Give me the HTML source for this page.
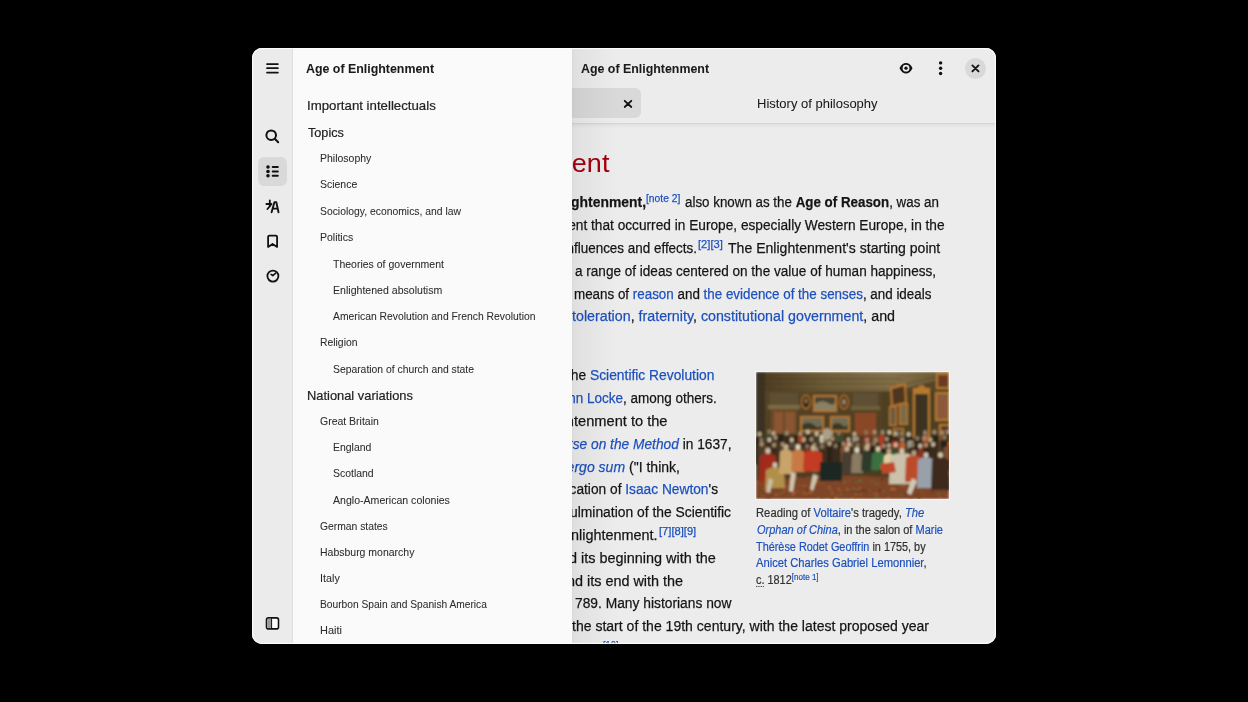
<!DOCTYPE html>
<html><head><meta charset="utf-8"><style>

*{margin:0;padding:0;box-sizing:border-box}
html,body{width:1248px;height:702px;overflow:hidden;background:#000;font-family:"Liberation Sans", sans-serif}
b{font-weight:700}
.a{color:#1d50bd}
.ii{font-style:italic}
sup{font-size:0.74em;vertical-align:0.42em;line-height:0}
.t{position:absolute;white-space:nowrap;transform-origin:0 0}
.pre{position:absolute;right:100%;top:0;white-space:pre}

.win{position:absolute;left:252px;top:48px;width:744px;height:596px;border-radius:10px;overflow:hidden;background:#ececec}
.body{font-size:15.5px;line-height:15.5px;color:#141414;-webkit-text-stroke:0.25px currentColor}
.cap{font-size:12.5px;line-height:12.5px;color:#303030;-webkit-text-stroke:0.2px currentColor}
.toc1{font-size:13.2px;line-height:13.2px;color:#222;-webkit-text-stroke:0.2px currentColor}
.toc2{font-size:11.2px;line-height:11.2px;color:#2a2a2a;-webkit-text-stroke:0.05px currentColor}
.ttl{position:absolute;white-space:nowrap;font-weight:700;font-size:13px;line-height:13px;color:#1a1a1a;transform-origin:0 0;-webkit-text-stroke:0.05px currentColor}
.hdr{position:absolute;left:40px;top:0;width:704px;height:40px;background:#ececec}
.tabs{position:absolute;left:40px;top:40px;width:704px;height:36px;background:#ececec;border-bottom:1px solid #d6d6d6}
.tsh{position:absolute;left:40px;top:76px;width:704px;height:4px;background:linear-gradient(rgba(0,0,0,0.05),rgba(0,0,0,0))}
.tab{position:absolute;left:0;top:40px;width:389px;height:30px;border-radius:6px;background:#d9d9d9}
.art{position:absolute;left:40px;top:77px;width:704px;height:520px;background:#ececec}
.shade{position:absolute;left:320px;top:0;width:50px;height:596px;background:linear-gradient(to right,rgba(0,0,0,0.08) 0,rgba(0,0,0,0.055) 2px,rgba(0,0,0,0.045) 8px,rgba(0,0,0,0.03) 18px,rgba(0,0,0,0.012) 34px,rgba(0,0,0,0) 48px)}
.strip{position:absolute;left:0;top:0;width:41px;height:596px;background:#ebebeb;border-right:1px solid #dedede}
.side{position:absolute;left:41px;top:0;width:279px;height:596px;background:#fafafa}
.selbtn{position:absolute;left:6px;top:109px;width:29px;height:29px;border-radius:6px;background:#d9d9d9}
.closebtn{position:absolute;left:713px;top:10px;width:21px;height:21px;border-radius:50%;background:#d9d9d9}
.border{position:absolute;left:252px;top:48px;width:744px;height:596px;border-radius:10px;box-shadow:inset 0 0 0 1px rgba(255,255,255,0.75),inset 0 0 2px 1px rgba(255,255,255,0.45);pointer-events:none}
svg{position:absolute;overflow:visible}
.head{position:absolute;white-space:nowrap;font-size:26.5px;line-height:26.5px;color:#a5000f;transform-origin:0 0}
.img{position:absolute;left:503px;top:323px;width:195px;height:129px;background:#f4f4f4}
</style></head><body>
<div class="win">
  <div class="hdr"></div>
  <div class="tabs"></div>
  <div class="tab"></div>
  <div class="art"></div>
  <div class="tsh"></div>
  <!-- content title -->
  <div class="ttl" style="left:328.5px;top:14px;transform:scaleX(0.953)">Age of Enlightenment</div>
  <div class="ttl" style="left:505px;top:48.9px;font-weight:400;transform:scaleX(0.999)">History of philosophy</div>
  <!-- tab close -->
  <svg style="left:369.5px;top:49.5px" width="12" height="12" viewBox="0 0 12 12"><path d="M2.7 2.8 L9.3 9.0 M9.3 2.8 L2.7 9.0" stroke="#111" stroke-width="1.8" stroke-linecap="round"/></svg>
  <!-- eye -->
  <svg style="left:644.6px;top:12px" width="18" height="18" viewBox="0 0 18 18"><path d="M2.5 8.2 C4.1 4.6 6.5 3 9 3 C11.5 3 13.9 4.6 15.5 8.2 C13.9 11.8 11.5 13.4 9 13.4 C6.5 13.4 4.1 11.8 2.5 8.2 Z" fill="#111"/><circle cx="9" cy="8.2" r="3.4" fill="#ececec"/><circle cx="9" cy="8.2" r="1.65" fill="#111"/></svg>
  <!-- dots -->
  <svg style="left:680px;top:12px" width="18" height="18" viewBox="0 0 18 18"><circle cx="8.6" cy="2.9" r="1.7" fill="#111"/><circle cx="8.6" cy="8.2" r="1.7" fill="#111"/><circle cx="8.6" cy="13.5" r="1.7" fill="#111"/></svg>
  <div class="closebtn"></div>
  <svg style="left:713px;top:10px" width="21" height="21" viewBox="0 0 21 21"><path d="M7.4 7.4 L13.5 13.4 M13.5 7.4 L7.4 13.4" stroke="#111" stroke-width="1.9" stroke-linecap="round"/></svg>

  <!-- article heading -->
  <div class="head" style="right:387px;top:101.6px;transform:scaleX(1.02);transform-origin:100% 0">Age of Enlightenment</div>

  <div class="t body" style="left:394.4px;top:146.4px;transform:scaleX(0.8964)"><span class="pre">The Age of Enlightenment or the <b>Enlightenment,</b></span><sup class="a">[note 2]</sup></div>
<div class="t body" style="left:433.3px;top:146.4px;transform:scaleX(0.8617)">also known as the <b>Age of Reason</b>, was an</div>
<div class="t body" style="left:339.0px;top:169.2px;transform:scaleX(0.8832)"><span class="pre">philosophical movement </span>that occurred in Europe, especially Western Europe, in the</div>
<div class="t body" style="left:321.6px;top:192.0px;transform:scaleX(0.8668)"><span class="pre">18th centuries, with global in</span>fluences and effects.</div>
<div class="t body" style="left:445.6px;top:192.0px;transform:scaleX(0.9759)"><sup class="a">[2][3]</sup></div>
<div class="t body" style="left:475.5px;top:192.0px;transform:scaleX(0.9077)">The Enlightenment&#x27;s starting point</div>
<div class="t body" style="left:323.0px;top:214.8px;transform:scaleX(0.8746)"><span class="pre">included </span>a range of ideas centered on the value of human happiness,</div>
<div class="t body" style="left:321.6px;top:237.6px;transform:scaleX(0.8640)"><span class="pre">pursuit of knowledge obtained by </span>means of <span class="a">reason</span> and <span class="a">the evidence of the senses</span>, and ideals</div>
<div class="t body" style="left:320.0px;top:260.4px;transform:scaleX(0.9195)"><span class="pre">such as <span class="a">liberty</span>, <span class="a">progress</span>, </span><span class="a">toleration</span>, <span class="a">fraternity</span>, <span class="a">constitutional government</span>, and</div>
<div class="t body" style="left:337.8px;top:319.3px;transform:scaleX(0.8913)"><span class="pre">following the </span><span class="a">Scientific Revolution</span></div>
<div class="t body" style="left:335.3px;top:342.1px;transform:scaleX(0.8700)"><span class="pre">Baruch Spinoza, <span class="a">John </span></span><span class="a">Locke</span>, among others.</div>
<div class="t body" style="left:321.5px;top:364.9px;transform:scaleX(0.9436)"><span class="pre">of the Enligh</span>tenment to the</div>
<div class="t body" style="left:339.0px;top:387.7px;transform:scaleX(0.8860)"><span class="pre"><span class="a ii">Discourse </span></span><span class="a ii">on the Method</span> in 1637,</div>
<div class="t body" style="left:376.6px;top:410.5px;transform:scaleX(0.9054)"><span class="pre"><span class="a ii">Cogito, </span><span class="a ii">ergo sum </span></span>(&quot;I think,</div>
<div class="t body" style="left:358.0px;top:433.3px;transform:scaleX(0.8862)"><span class="pre">publication </span>of <span class="a">Isaac Newton</span>&#x27;s</div>
<div class="t body" style="left:385.0px;top:456.1px;transform:scaleX(0.8943)"><span class="pre">the culmination </span>of the Scientific</div>
<div class="t body" style="left:319.3px;top:478.9px;transform:scaleX(0.9295)"><span class="pre">E</span>nlightenment.</div>
<div class="t body" style="left:406.8px;top:478.9px;transform:scaleX(0.9722)"><sup class="a">[7][8][9]</sup></div>
<div class="t body" style="left:329.4px;top:501.7px;transform:scaleX(0.9319)"><span class="pre">marked </span>its beginning with the</div>
<div class="t body" style="left:334.5px;top:524.5px;transform:scaleX(0.9293)"><span class="pre">and </span>its end with the</div>
<div class="t body" style="left:322.5px;top:547.3px;transform:scaleX(0.8904)"><span class="pre">in </span>789. Many historians now</div>
<div class="t body" style="left:320.0px;top:570.1px;transform:scaleX(0.9053)"><span class="pre">date </span>the start of the 19th century, with the latest proposed year</div>
<div class="t body" style="left:351.0px;top:592.9px;transform:scaleX(0.8098)"><span class="pre"></span><sup class="a">[10]</sup></div>

  <div class="img"></div>
  <svg style="left:504px;top:324px" width="193" height="127" viewBox="0 0 193 127">
<defs>
<linearGradient id="cl" x1="0" y1="0" x2="1" y2="0">
<stop offset="0" stop-color="#4a3a20"/><stop offset="0.35" stop-color="#6e5c36"/><stop offset="0.7" stop-color="#84704a"/><stop offset="1" stop-color="#6a5630"/>
</linearGradient>
<linearGradient id="wl" x1="0" y1="0" x2="0" y2="1">
<stop offset="0" stop-color="#574626"/><stop offset="1" stop-color="#4a3a22"/>
</linearGradient>
<filter id="bl" x="-5%" y="-5%" width="110%" height="110%"><feGaussianBlur stdDeviation="0.8"/></filter>
<clipPath id="cp"><rect width="193" height="127"/></clipPath>
</defs>
<g clip-path="url(#cp)" filter="url(#bl)">
<rect width="193" height="127" fill="url(#wl)"/>
<path d="M0 0 H193 V6 L140 19 H0 Z" fill="url(#cl)"/>
<path d="M0 7 H145 M0 12 H140 M0 17 H136 M140 19 L193 6 M146 13 L193 2" stroke="#3e3018" stroke-width="0.9" fill="none" opacity="0.55"/>
<rect x="0" y="0" width="9" height="80" fill="#3a3020"/>
<rect x="14" y="21" width="28" height="13" fill="#5e5032"/>
<rect x="12" y="33" width="32" height="4" fill="#7a6a44"/>
<rect x="15" y="37" width="26" height="25" fill="#6a4828"/>
<rect x="18" y="40" width="9" height="21" fill="#8a5430"/>
<rect x="29" y="40" width="10" height="21" fill="#8a5430"/>
<ellipse cx="50" cy="30" rx="5" ry="7.5" fill="#a86c2c"/><ellipse cx="50" cy="30" rx="3.5" ry="5.8" fill="#2e2418"/><ellipse cx="50" cy="29" rx="1.7" ry="2.4" fill="#8a7050"/>
<rect x="57" y="23" width="24" height="17" fill="#ae7430"/><rect x="59" y="25" width="20" height="13" fill="#4a4434"/><path d="M59 32 Q66 27 72 31 T79 30 V38 H59 Z" fill="#8a8062"/>
<ellipse cx="88" cy="30" rx="5" ry="7.5" fill="#a86c2c"/><ellipse cx="88" cy="30" rx="3.5" ry="5.8" fill="#3a2c20"/><ellipse cx="88" cy="30" rx="1.8" ry="3" fill="#9a8868"/>
<rect x="44" y="44" width="24" height="16" fill="#ae7430"/><rect x="46" y="46" width="20" height="12" fill="#6e6c54"/><path d="M46 53 Q52 48 58 53 T66 52 V58 H46 Z" fill="#3e3826"/>
<rect x="74" y="44" width="20" height="16" fill="#ae7430"/><rect x="76" y="46" width="16" height="12" fill="#6e6c54"/><path d="M76 53 Q82 49 86 53 T92 52 V58 H76 Z" fill="#3e3826"/>
<rect x="97" y="21" width="25" height="14" fill="#5e5034"/>
<rect x="95" y="34" width="29" height="4" fill="#6e5e3a"/>
<rect x="99" y="41" width="21" height="22" fill="#8a4628"/>
<rect x="126" y="19" width="67" height="50" fill="#4e4024"/>
<path d="M134 15 L150 11 L151 32 L135 35 Z" fill="#b4742e"/><path d="M136 17 L148 14 L149 30 L137 33 Z" fill="#4e3422"/>
<rect x="133" y="34" width="8" height="20" fill="#b4742e"/><rect x="134.5" y="35.5" width="5" height="17" fill="#6a5a40"/>
<rect x="143" y="31" width="9" height="22" fill="#b4742e"/><rect x="144.5" y="32.5" width="6" height="19" fill="#7a6a48"/>
<rect x="137" y="56" width="11" height="10" fill="#b4742e"/><rect x="138.5" y="57.5" width="8" height="7" fill="#5a4a36"/>
<rect x="157" y="16" width="17" height="50" fill="#b4782e"/><rect x="159" y="22" width="13" height="44" fill="#3a3222"/>
<path d="M161 16 Q165.5 10 170 16 Z" fill="#b4782e"/>
<rect x="180" y="1" width="13" height="16" fill="#b4782e"/><rect x="182" y="3" width="10" height="12" fill="#6a3a28"/>
<rect x="179" y="20" width="14" height="29" fill="#b4782e"/><rect x="181" y="22" width="11" height="25" fill="#8a5a3a"/>
<rect x="183" y="52" width="10" height="12" fill="#b4782e"/><rect x="185" y="54" width="8" height="9" fill="#5a3a28"/>
<path d="M0 110 Q60 102 110 104 Q160 106 193 116 V127 H0 Z" fill="#7e4428"/>

<rect x="87.3" y="116.9" width="2.7" height="1.2" fill="#8a3a22"/>
<rect x="98.0" y="117.5" width="3.5" height="1.2" fill="#6a6a3a"/>
<rect x="91.8" y="118.1" width="1.7" height="1.2" fill="#6a6a3a"/>
<rect x="58.6" y="106.1" width="3.7" height="1.2" fill="#8a3a22"/>
<rect x="122.4" y="117.7" width="3.9" height="1.2" fill="#5a3020"/>
<rect x="126.2" y="118.2" width="3.1" height="1.2" fill="#6a6a3a"/>
<rect x="160.5" y="105.5" width="2.0" height="1.2" fill="#a05a30"/>
<rect x="46.7" y="104.7" width="2.3" height="1.2" fill="#5a3020"/>
<rect x="114.1" y="108.5" width="3.1" height="1.2" fill="#6a6a3a"/>
<rect x="96.5" y="119.2" width="3.1" height="1.2" fill="#5a3020"/>
<rect x="78.5" y="116.7" width="1.7" height="1.2" fill="#8a3a22"/>
<rect x="49.0" y="121.4" width="2.2" height="1.2" fill="#b8702e"/>
<rect x="13.6" y="121.6" width="1.8" height="1.2" fill="#5a3020"/>
<rect x="56.1" y="105.5" width="3.6" height="1.2" fill="#a05a30"/>
<rect x="0.1" y="108.8" width="2.7" height="1.2" fill="#a05a30"/>
<rect x="189.2" y="113.1" width="2.9" height="1.2" fill="#a05a30"/>
<rect x="38.3" y="119.5" width="1.7" height="1.2" fill="#b06a38"/>
<rect x="64.2" y="126.2" width="3.8" height="1.2" fill="#8a3a22"/>
<rect x="26.0" y="120.3" width="1.6" height="1.2" fill="#a05a30"/>
<rect x="153.8" y="108.1" width="2.0" height="1.2" fill="#b8702e"/>
<rect x="98.2" y="126.7" width="1.8" height="1.2" fill="#8a3a22"/>
<rect x="124.2" y="106.7" width="4.0" height="1.2" fill="#5a3020"/>
<rect x="0.1" y="123.9" width="3.0" height="1.2" fill="#8a3a22"/>
<rect x="192.6" y="104.5" width="2.5" height="1.2" fill="#6a6a3a"/>
<rect x="164.9" y="118.8" width="1.6" height="1.2" fill="#a05a30"/>
<rect x="28.2" y="114.2" width="3.4" height="1.2" fill="#a05a30"/>
<rect x="63.5" y="110.8" width="1.7" height="1.2" fill="#a05a30"/>
<rect x="40.3" y="118.6" width="3.0" height="1.2" fill="#a05a30"/>
<rect x="71.7" y="114.4" width="2.7" height="1.2" fill="#b8702e"/>
<rect x="110.9" y="123.9" width="3.1" height="1.2" fill="#6a6a3a"/>
<rect x="60.0" y="109.3" width="2.1" height="1.2" fill="#b8702e"/>
<rect x="36.6" y="121.0" width="2.0" height="1.2" fill="#b8702e"/>
<rect x="183.4" y="124.3" width="1.7" height="1.2" fill="#b8702e"/>
<rect x="9.1" y="106.5" width="3.9" height="1.2" fill="#b8702e"/>
<rect x="46.0" y="120.2" width="2.6" height="1.2" fill="#b06a38"/>
<rect x="174.6" y="115.3" width="1.9" height="1.2" fill="#b8702e"/>
<rect x="139.0" y="105.6" width="2.7" height="1.2" fill="#6a6a3a"/>
<rect x="126.1" y="118.2" width="2.2" height="1.2" fill="#a05a30"/>
<rect x="177.1" y="108.7" width="1.7" height="1.2" fill="#a05a30"/>
<rect x="79.4" y="109.7" width="1.9" height="1.2" fill="#a05a30"/>
<rect x="71.2" y="117.2" width="1.7" height="1.2" fill="#6a6a3a"/>
<rect x="26.7" y="114.4" width="3.1" height="1.2" fill="#b06a38"/>
<rect x="133.4" y="117.4" width="3.0" height="1.2" fill="#6a6a3a"/>
<rect x="178.3" y="114.9" width="3.3" height="1.2" fill="#b06a38"/>
<rect x="185.8" y="104.5" width="1.7" height="1.2" fill="#7a5a34"/>
<rect x="13.0" y="111.2" width="4.0" height="1.2" fill="#6a6a3a"/>
<rect x="14.5" y="116.6" width="1.6" height="1.2" fill="#7a5a34"/>
<rect x="180.7" y="121.0" width="3.5" height="1.2" fill="#6a6a3a"/>
<rect x="176.6" y="112.1" width="2.7" height="1.2" fill="#7a5a34"/>
<rect x="15.0" y="123.7" width="1.6" height="1.2" fill="#8a3a22"/>
<rect x="96.5" y="104.3" width="2.5" height="1.2" fill="#7a5a34"/>
<rect x="112.5" y="118.0" width="1.7" height="1.2" fill="#a05a30"/>
<rect x="22.3" y="109.9" width="3.3" height="1.2" fill="#5a3020"/>
<rect x="75.0" y="120.9" width="2.6" height="1.2" fill="#b8702e"/>
<rect x="89.3" y="116.4" width="3.4" height="1.2" fill="#b8702e"/>
<rect x="5.7" y="117.8" width="1.6" height="1.2" fill="#5a3020"/>
<rect x="184.8" y="106.6" width="3.0" height="1.2" fill="#8a3a22"/>
<rect x="177.6" y="109.9" width="2.4" height="1.2" fill="#a05a30"/>
<rect x="27.6" y="118.1" width="1.9" height="1.2" fill="#b8702e"/>
<rect x="174.8" y="119.2" width="2.7" height="1.2" fill="#5a3020"/>
<rect x="46.6" y="113.3" width="2.0" height="1.2" fill="#b06a38"/>
<rect x="83.2" y="122.5" width="3.7" height="1.2" fill="#6a6a3a"/>
<rect x="74.2" y="117.4" width="2.0" height="1.2" fill="#b06a38"/>
<rect x="26.0" y="112.1" width="1.6" height="1.2" fill="#8a3a22"/>
<rect x="12.4" y="126.5" width="1.9" height="1.2" fill="#8a3a22"/>
<rect x="87.0" y="110.3" width="3.6" height="1.2" fill="#6a6a3a"/>
<rect x="73.8" y="116.0" width="2.3" height="1.2" fill="#7a5a34"/>
<rect x="161.9" y="126.6" width="2.3" height="1.2" fill="#5a3020"/>
<rect x="159.9" y="110.4" width="1.6" height="1.2" fill="#b8702e"/>
<rect x="136.8" y="117.1" width="3.1" height="1.2" fill="#b06a38"/>
<rect x="108.9" y="118.7" width="2.6" height="1.2" fill="#5a3020"/>
<rect x="4.8" y="123.1" width="3.4" height="1.2" fill="#6a6a3a"/>
<rect x="153.8" y="126.6" width="2.6" height="1.2" fill="#a05a30"/>
<rect x="121.6" y="119.1" width="2.4" height="1.2" fill="#8a3a22"/>
<rect x="15.0" y="108.6" width="2.7" height="1.2" fill="#8a3a22"/>
<rect x="34.5" y="104.2" width="2.8" height="1.2" fill="#5a3020"/>
<rect x="7.0" y="109.2" width="2.4" height="1.2" fill="#8a3a22"/>
<rect x="134.6" y="116.0" width="4.0" height="1.2" fill="#b8702e"/>
<rect x="30.7" y="123.5" width="3.8" height="1.2" fill="#7a5a34"/>
<rect x="16.8" y="125.4" width="2.5" height="1.2" fill="#7a5a34"/>
<rect x="86.9" y="108.5" width="2.4" height="1.2" fill="#a05a30"/>
<rect x="109.8" y="124.2" width="3.5" height="1.2" fill="#8a3a22"/>
<rect x="66.2" y="111.5" width="1.7" height="1.2" fill="#6a6a3a"/>
<rect x="167.2" y="122.4" width="1.8" height="1.2" fill="#7a5a34"/>
<rect x="46.8" y="113.0" width="3.9" height="1.2" fill="#a05a30"/>
<rect x="103.6" y="122.2" width="2.2" height="1.2" fill="#b06a38"/>
<rect x="138.6" y="104.4" width="1.7" height="1.2" fill="#b8702e"/>
<rect x="85.1" y="116.7" width="2.2" height="1.2" fill="#8a3a22"/>
<rect x="177.5" y="109.0" width="1.7" height="1.2" fill="#8a3a22"/>
<rect x="154.4" y="108.0" width="3.2" height="1.2" fill="#b06a38"/>
<rect x="176.8" y="114.8" width="3.8" height="1.2" fill="#b8702e"/>
<rect x="100.0" y="119.6" width="3.9" height="1.2" fill="#5a3020"/>
<rect x="95.1" y="125.8" width="3.4" height="1.2" fill="#a05a30"/>
<rect x="84.8" y="116.9" width="3.3" height="1.2" fill="#8a3a22"/>
<rect x="123.3" y="116.0" width="3.8" height="1.2" fill="#8a3a22"/>
<rect x="49.5" y="119.4" width="3.7" height="1.2" fill="#8a3a22"/>
<rect x="117.6" y="111.0" width="3.9" height="1.2" fill="#6a6a3a"/>
<rect x="101.2" y="117.2" width="2.5" height="1.2" fill="#6a6a3a"/>
<rect x="22.1" y="104.1" width="1.6" height="1.2" fill="#5a3020"/>
<rect x="187.1" y="115.9" width="2.9" height="1.2" fill="#5a3020"/>
<rect x="191.0" y="106.8" width="3.2" height="1.2" fill="#a05a30"/>
<rect x="12.7" y="116.4" width="3.8" height="1.2" fill="#5a3020"/>
<rect x="154.5" y="113.3" width="2.7" height="1.2" fill="#6a6a3a"/>
<rect x="24.5" y="114.0" width="3.8" height="1.2" fill="#8a3a22"/>
<rect x="177.6" y="116.1" width="2.0" height="1.2" fill="#a05a30"/>
<rect x="119.3" y="125.3" width="3.3" height="1.2" fill="#6a6a3a"/>
<rect x="188.6" y="104.8" width="2.1" height="1.2" fill="#6a6a3a"/>
<rect x="132.6" y="111.4" width="2.1" height="1.2" fill="#b06a38"/>
<rect x="96.3" y="115.5" width="1.8" height="1.2" fill="#b8702e"/>
<rect x="98.5" y="109.8" width="3.3" height="1.2" fill="#6a6a3a"/>
<rect x="169.6" y="104.5" width="2.5" height="1.2" fill="#7a5a34"/>
<rect x="102.2" y="107.7" width="3.7" height="1.2" fill="#6a6a3a"/>
<rect x="103.1" y="109.0" width="3.6" height="1.2" fill="#6a6a3a"/>
<rect x="118.1" y="123.7" width="3.8" height="1.2" fill="#6a6a3a"/>
<rect x="121.2" y="112.0" width="2.3" height="1.2" fill="#6a6a3a"/>
<rect x="60.8" y="125.2" width="3.4" height="1.2" fill="#6a6a3a"/>
<rect x="37.5" y="106.2" width="1.8" height="1.2" fill="#6a6a3a"/>
<rect x="17.0" y="112.9" width="3.6" height="1.2" fill="#5a3020"/>
<rect x="81.4" y="122.2" width="2.0" height="1.2" fill="#6a6a3a"/>
<rect x="121.2" y="122.4" width="2.0" height="1.2" fill="#a05a30"/>
<rect x="131.7" y="125.0" width="1.8" height="1.2" fill="#b06a38"/>
<rect x="97.6" y="121.4" width="4.0" height="1.2" fill="#b8702e"/>
<rect x="160.8" y="122.5" width="1.8" height="1.2" fill="#5a3020"/>
<rect x="7.2" y="116.7" width="3.8" height="1.2" fill="#b8702e"/>
<rect x="92.9" y="108.4" width="2.0" height="1.2" fill="#a05a30"/>
<rect x="162.2" y="126.8" width="1.7" height="1.2" fill="#7a5a34"/>
<rect x="12.0" y="125.9" width="1.7" height="1.2" fill="#5a3020"/>
<rect x="18.7" y="113.0" width="2.8" height="1.2" fill="#5a3020"/>
<rect x="83.0" y="117.8" width="3.1" height="1.2" fill="#a05a30"/>
<rect x="7.9" y="108.6" width="2.6" height="1.2" fill="#5a3020"/>
<rect x="142.7" y="113.3" width="3.0" height="1.2" fill="#6a6a3a"/>
<rect x="18.3" y="122.2" width="3.7" height="1.2" fill="#b06a38"/>
<rect x="154.7" y="120.2" width="3.8" height="1.2" fill="#8a3a22"/>
<rect x="181.3" y="117.1" width="2.8" height="1.2" fill="#6a6a3a"/>
<rect x="189.7" y="122.5" width="2.2" height="1.2" fill="#b06a38"/>
<rect x="22.4" y="121.1" width="3.5" height="1.2" fill="#6a6a3a"/>
<rect x="78.3" y="124.6" width="3.2" height="1.2" fill="#b8702e"/>
<rect x="148.1" y="121.6" width="2.0" height="1.2" fill="#5a3020"/>
<rect x="35.7" y="122.3" width="2.7" height="1.2" fill="#b06a38"/>
<rect x="2.0" y="112.2" width="3.8" height="1.2" fill="#7a5a34"/>
<rect x="9.6" y="110.3" width="2.2" height="1.2" fill="#7a5a34"/>
<rect x="41.7" y="113.3" width="2.8" height="1.2" fill="#6a6a3a"/>
<rect x="75.2" y="127.0" width="2.0" height="1.2" fill="#7a5a34"/>
<rect x="23.1" y="113.1" width="1.6" height="1.2" fill="#b8702e"/>
<rect x="118.8" y="121.0" width="2.6" height="1.2" fill="#b06a38"/>
<rect x="97.4" y="121.5" width="2.4" height="1.2" fill="#7a5a34"/>
<rect x="19.0" y="109.8" width="2.9" height="1.2" fill="#b06a38"/>
<rect x="98.0" y="126.2" width="3.6" height="1.2" fill="#b8702e"/>
<rect x="19.2" y="114.2" width="1.7" height="1.2" fill="#7a5a34"/>
<rect x="115.3" y="121.5" width="2.5" height="1.2" fill="#a05a30"/>
<rect x="181.2" y="112.9" width="3.6" height="1.2" fill="#6a6a3a"/>
<rect x="104.6" y="117.7" width="3.9" height="1.2" fill="#5a3020"/>
<rect x="81.2" y="116.1" width="2.3" height="1.2" fill="#b8702e"/>
<rect x="102.4" y="115.1" width="2.9" height="1.2" fill="#b06a38"/>
<rect x="54.7" y="120.5" width="1.6" height="1.2" fill="#b06a38"/>
<rect x="149.1" y="117.5" width="1.9" height="1.2" fill="#7a5a34"/>
<rect x="145.6" y="113.0" width="3.4" height="1.2" fill="#b06a38"/>
<rect x="9.7" y="126.7" width="1.7" height="1.2" fill="#b06a38"/>
<rect x="174.8" y="113.9" width="2.1" height="1.2" fill="#5a3020"/>
<rect x="145.8" y="105.0" width="3.8" height="1.2" fill="#a05a30"/>
<rect x="139.5" y="114.8" width="2.1" height="1.2" fill="#8a3a22"/>
<rect x="136.3" y="105.2" width="2.6" height="1.2" fill="#5a3020"/>
<rect x="39.3" y="105.2" width="1.9" height="1.2" fill="#b8702e"/>
<rect x="70.1" y="107.2" width="2.6" height="1.2" fill="#5a3020"/>
<rect x="50.6" y="117.4" width="2.4" height="1.2" fill="#5a3020"/>
<rect x="143.6" y="122.7" width="3.9" height="1.2" fill="#6a6a3a"/>
<rect x="141.7" y="109.5" width="2.8" height="1.2" fill="#a05a30"/>
<rect x="59.6" y="115.7" width="2.4" height="1.2" fill="#8a3a22"/>
<rect x="52.4" y="119.8" width="3.2" height="1.2" fill="#b8702e"/>
<rect x="36.7" y="110.4" width="2.0" height="1.2" fill="#6a6a3a"/>
<rect x="-0.8" y="64.7" width="7.9" height="28.0" rx="1.5" fill="#2a2018"/>
<ellipse cx="3.6" cy="62.2" rx="2" ry="2.4" fill="#b8a888"/>
<rect x="9.9" y="62.2" width="5.1" height="28.0" rx="1.5" fill="#3a4a30"/>
<ellipse cx="13.2" cy="59.7" rx="2" ry="2.4" fill="#8a7458"/>
<rect x="15.2" y="63.9" width="6.3" height="28.0" rx="1.5" fill="#3a2c1e"/>
<ellipse cx="17.5" cy="61.4" rx="2" ry="2.4" fill="#b8a888"/>
<rect x="21.1" y="62.2" width="6.6" height="28.0" rx="1.5" fill="#2a2018"/>
<rect x="27.4" y="63.7" width="7.0" height="28.0" rx="1.5" fill="#3a2c1e"/>
<ellipse cx="30.7" cy="61.2" rx="2" ry="2.4" fill="#9a8a70"/>
<rect x="35.9" y="63.4" width="6.1" height="28.0" rx="1.5" fill="#2a2018"/>
<rect x="42.1" y="64.2" width="6.0" height="28.0" rx="1.5" fill="#b03a22"/>
<ellipse cx="44.3" cy="61.7" rx="2" ry="2.4" fill="#a89070"/>
<rect x="50.0" y="62.4" width="5.2" height="28.0" rx="1.5" fill="#2a2018"/>
<ellipse cx="51.9" cy="59.9" rx="2" ry="2.4" fill="#c8bca0"/>
<rect x="56.9" y="64.3" width="6.9" height="28.0" rx="1.5" fill="#4a3a28"/>
<ellipse cx="60.7" cy="61.8" rx="2" ry="2.4" fill="#c8bca0"/>
<rect x="63.8" y="62.8" width="6.3" height="28.0" rx="1.5" fill="#d0c8b0"/>
<rect x="72.0" y="64.0" width="6.1" height="28.0" rx="1.5" fill="#4a3a28"/>
<ellipse cx="75.3" cy="61.5" rx="2" ry="2.4" fill="#a89070"/>
<rect x="80.5" y="63.6" width="6.0" height="28.0" rx="1.5" fill="#3a4a30"/>
<ellipse cx="82.8" cy="61.1" rx="2" ry="2.4" fill="#8a7458"/>
<rect x="88.1" y="63.3" width="7.8" height="28.0" rx="1.5" fill="#3a2c1e"/>
<rect x="96.5" y="64.6" width="5.3" height="28.0" rx="1.5" fill="#9a9a8a"/>
<ellipse cx="98.4" cy="62.1" rx="2" ry="2.4" fill="#b8a888"/>
<rect x="101.5" y="63.7" width="5.2" height="28.0" rx="1.5" fill="#4a3a28"/>
<rect x="107.5" y="62.9" width="7.1" height="28.0" rx="1.5" fill="#8a3020"/>
<ellipse cx="110.1" cy="60.4" rx="2" ry="2.4" fill="#8a7458"/>
<rect x="116.6" y="62.6" width="5.2" height="28.0" rx="1.5" fill="#7a5030"/>
<ellipse cx="118.6" cy="60.1" rx="2" ry="2.4" fill="#a89070"/>
<rect x="123.0" y="62.9" width="5.2" height="28.0" rx="1.5" fill="#b03a22"/>
<ellipse cx="126.5" cy="60.4" rx="2" ry="2.4" fill="#9a8a70"/>
<rect x="129.6" y="62.8" width="7.1" height="28.0" rx="1.5" fill="#2a2018"/>
<ellipse cx="133.4" cy="60.3" rx="2" ry="2.4" fill="#c8bca0"/>
<rect x="136.5" y="64.2" width="6.1" height="28.0" rx="1.5" fill="#3a2c1e"/>
<ellipse cx="139.8" cy="61.7" rx="2" ry="2.4" fill="#b8a888"/>
<rect x="143.1" y="64.1" width="5.4" height="28.0" rx="1.5" fill="#4a3a28"/>
<ellipse cx="145.4" cy="61.6" rx="2" ry="2.4" fill="#8a7458"/>
<rect x="149.4" y="64.8" width="7.8" height="28.0" rx="1.5" fill="#2a2018"/>
<ellipse cx="152.7" cy="62.3" rx="2" ry="2.4" fill="#c8bca0"/>
<rect x="159.9" y="64.4" width="6.3" height="28.0" rx="1.5" fill="#2a2018"/>
<rect x="166.6" y="63.2" width="6.0" height="28.0" rx="1.5" fill="#c06030"/>
<ellipse cx="169.1" cy="60.7" rx="2" ry="2.4" fill="#9a8a70"/>
<rect x="174.7" y="62.7" width="7.7" height="28.0" rx="1.5" fill="#2a2018"/>
<ellipse cx="178.3" cy="60.2" rx="2" ry="2.4" fill="#9a8a70"/>
<rect x="183.0" y="63.1" width="6.1" height="28.0" rx="1.5" fill="#7a5030"/>
<ellipse cx="186.5" cy="60.6" rx="2" ry="2.4" fill="#9a8a70"/>
<rect x="189.7" y="62.6" width="6.2" height="28.0" rx="1.5" fill="#2a2018"/>
<ellipse cx="191.9" cy="60.1" rx="2" ry="2.4" fill="#a89070"/>
<rect x="2.0" y="70.5" width="6.6" height="26.0" rx="1.5" fill="#4a3a28"/>
<ellipse cx="5.3" cy="68.0" rx="2" ry="2.4" fill="#8a7458"/>
<rect x="9.8" y="70.3" width="5.5" height="26.0" rx="1.5" fill="#3a2c1e"/>
<ellipse cx="13.4" cy="67.8" rx="2" ry="2.4" fill="#c8bca0"/>
<rect x="17.2" y="68.1" width="5.8" height="26.0" rx="1.5" fill="#4a3a28"/>
<ellipse cx="19.4" cy="65.6" rx="2" ry="2.4" fill="#a89070"/>
<rect x="24.0" y="69.7" width="6.6" height="26.0" rx="1.5" fill="#3a2c1e"/>
<rect x="33.2" y="70.4" width="7.0" height="26.0" rx="1.5" fill="#5a4a38"/>
<ellipse cx="35.8" cy="67.9" rx="2" ry="2.4" fill="#c8bca0"/>
<rect x="39.6" y="70.4" width="6.6" height="26.0" rx="1.5" fill="#4a3a28"/>
<rect x="45.9" y="70.2" width="5.2" height="26.0" rx="1.5" fill="#3a2c1e"/>
<ellipse cx="47.8" cy="67.7" rx="2" ry="2.4" fill="#b8a888"/>
<rect x="53.0" y="69.9" width="5.3" height="26.0" rx="1.5" fill="#2a2018"/>
<ellipse cx="55.3" cy="67.4" rx="2" ry="2.4" fill="#9a8a70"/>
<rect x="58.1" y="69.9" width="7.2" height="26.0" rx="1.5" fill="#4a3a28"/>
<rect x="65.5" y="70.3" width="5.7" height="26.0" rx="1.5" fill="#4a3a28"/>
<ellipse cx="68.9" cy="67.8" rx="2" ry="2.4" fill="#8a7458"/>
<rect x="72.1" y="69.2" width="7.3" height="26.0" rx="1.5" fill="#3a2c1e"/>
<ellipse cx="76.3" cy="66.7" rx="2" ry="2.4" fill="#a89070"/>
<rect x="79.9" y="70.0" width="7.9" height="26.0" rx="1.5" fill="#2a2018"/>
<rect x="88.9" y="70.2" width="6.6" height="26.0" rx="1.5" fill="#b03a22"/>
<ellipse cx="92.5" cy="67.7" rx="2" ry="2.4" fill="#b8a888"/>
<rect x="97.2" y="69.2" width="7.7" height="26.0" rx="1.5" fill="#4a3a28"/>
<ellipse cx="101.0" cy="66.7" rx="2" ry="2.4" fill="#a89070"/>
<rect x="107.4" y="70.6" width="7.0" height="26.0" rx="1.5" fill="#7a5030"/>
<ellipse cx="111.0" cy="68.1" rx="2" ry="2.4" fill="#a89070"/>
<rect x="116.5" y="70.7" width="7.5" height="26.0" rx="1.5" fill="#3a2c1e"/>
<ellipse cx="119.8" cy="68.2" rx="2" ry="2.4" fill="#9a8a70"/>
<rect x="126.8" y="69.6" width="6.9" height="26.0" rx="1.5" fill="#3a2c1e"/>
<ellipse cx="130.9" cy="67.1" rx="2" ry="2.4" fill="#a89070"/>
<rect x="135.5" y="69.3" width="7.4" height="26.0" rx="1.5" fill="#b03a22"/>
<rect x="143.8" y="70.2" width="5.4" height="26.0" rx="1.5" fill="#c06030"/>
<ellipse cx="146.2" cy="67.7" rx="2" ry="2.4" fill="#9a8a70"/>
<rect x="151.3" y="68.5" width="6.1" height="26.0" rx="1.5" fill="#9a9a8a"/>
<rect x="157.5" y="68.9" width="6.3" height="26.0" rx="1.5" fill="#2a2018"/>
<ellipse cx="161.6" cy="66.4" rx="2" ry="2.4" fill="#8a7458"/>
<rect x="166.2" y="68.9" width="5.2" height="26.0" rx="1.5" fill="#8a3020"/>
<ellipse cx="168.0" cy="66.4" rx="2" ry="2.4" fill="#9a8a70"/>
<rect x="171.1" y="70.3" width="6.9" height="26.0" rx="1.5" fill="#3a2c1e"/>
<ellipse cx="174.5" cy="67.8" rx="2" ry="2.4" fill="#b8a888"/>
<rect x="178.0" y="69.4" width="5.2" height="26.0" rx="1.5" fill="#3a2c1e"/>
<rect x="184.2" y="68.1" width="7.7" height="26.0" rx="1.5" fill="#2a2018"/>
<ellipse cx="188.9" cy="65.6" rx="2" ry="2.4" fill="#8a7458"/>
<rect x="191.6" y="68.7" width="5.6" height="26.0" rx="1.5" fill="#c06030"/>
<ellipse cx="194.9" cy="66.2" rx="2" ry="2.4" fill="#9a8a70"/>
<rect x="1.6" y="74.7" width="6.8" height="24.0" rx="1.5" fill="#4a3a28"/>
<ellipse cx="5.7" cy="72.2" rx="2" ry="2.4" fill="#a89070"/>
<rect x="8.3" y="74.5" width="5.8" height="24.0" rx="1.5" fill="#7a5030"/>
<rect x="15.8" y="75.6" width="5.9" height="24.0" rx="1.5" fill="#3a2c1e"/>
<ellipse cx="18.0" cy="73.1" rx="2" ry="2.4" fill="#a89070"/>
<rect x="23.6" y="74.8" width="6.4" height="24.0" rx="1.5" fill="#5a4a38"/>
<ellipse cx="26.6" cy="72.3" rx="2" ry="2.4" fill="#a89070"/>
<rect x="32.2" y="75.0" width="7.7" height="24.0" rx="1.5" fill="#4a3a28"/>
<rect x="41.3" y="75.4" width="7.9" height="24.0" rx="1.5" fill="#4a3a28"/>
<rect x="49.3" y="76.8" width="5.1" height="24.0" rx="1.5" fill="#8a3020"/>
<ellipse cx="51.2" cy="74.3" rx="2" ry="2.4" fill="#8a7458"/>
<rect x="55.9" y="75.6" width="6.2" height="24.0" rx="1.5" fill="#9a9a8a"/>
<ellipse cx="58.2" cy="73.1" rx="2" ry="2.4" fill="#9a8a70"/>
<rect x="63.1" y="77.0" width="5.8" height="24.0" rx="1.5" fill="#3a2c1e"/>
<ellipse cx="66.1" cy="74.5" rx="2" ry="2.4" fill="#8a7458"/>
<rect x="70.2" y="74.0" width="5.7" height="24.0" rx="1.5" fill="#2a2018"/>
<ellipse cx="73.5" cy="71.5" rx="2" ry="2.4" fill="#b8a888"/>
<rect x="76.7" y="76.4" width="6.1" height="24.0" rx="1.5" fill="#3a2c1e"/>
<ellipse cx="79.7" cy="73.9" rx="2" ry="2.4" fill="#8a7458"/>
<rect x="84.4" y="74.5" width="6.8" height="24.0" rx="1.5" fill="#7a5030"/>
<ellipse cx="87.5" cy="72.0" rx="2" ry="2.4" fill="#9a8a70"/>
<rect x="91.1" y="74.8" width="6.0" height="24.0" rx="1.5" fill="#3a2c1e"/>
<ellipse cx="93.1" cy="72.3" rx="2" ry="2.4" fill="#c8bca0"/>
<rect x="99.0" y="75.9" width="6.5" height="24.0" rx="1.5" fill="#2a2018"/>
<ellipse cx="101.6" cy="73.4" rx="2" ry="2.4" fill="#8a7458"/>
<rect x="108.2" y="75.6" width="5.8" height="24.0" rx="1.5" fill="#2a2018"/>
<ellipse cx="111.8" cy="73.1" rx="2" ry="2.4" fill="#b8a888"/>
<rect x="113.8" y="74.0" width="7.3" height="24.0" rx="1.5" fill="#2a2018"/>
<ellipse cx="118.2" cy="71.5" rx="2" ry="2.4" fill="#8a7458"/>
<rect x="123.4" y="76.5" width="7.5" height="24.0" rx="1.5" fill="#2a2018"/>
<ellipse cx="128.0" cy="74.0" rx="2" ry="2.4" fill="#9a8a70"/>
<rect x="130.5" y="76.1" width="5.8" height="24.0" rx="1.5" fill="#2a2018"/>
<ellipse cx="132.9" cy="73.6" rx="2" ry="2.4" fill="#b8a888"/>
<rect x="136.0" y="75.4" width="6.4" height="24.0" rx="1.5" fill="#3a4a30"/>
<ellipse cx="139.7" cy="72.9" rx="2" ry="2.4" fill="#c8bca0"/>
<rect x="144.9" y="76.6" width="6.8" height="24.0" rx="1.5" fill="#4a3a28"/>
<rect x="152.0" y="75.3" width="7.4" height="24.0" rx="1.5" fill="#3a2c1e"/>
<ellipse cx="156.6" cy="72.8" rx="2" ry="2.4" fill="#8a7458"/>
<rect x="162.0" y="76.5" width="5.3" height="24.0" rx="1.5" fill="#8a3020"/>
<ellipse cx="164.1" cy="74.0" rx="2" ry="2.4" fill="#c8bca0"/>
<rect x="167.3" y="75.6" width="6.6" height="24.0" rx="1.5" fill="#2a2018"/>
<ellipse cx="170.0" cy="73.1" rx="2" ry="2.4" fill="#a89070"/>
<rect x="173.8" y="74.9" width="7.5" height="24.0" rx="1.5" fill="#3a2c1e"/>
<ellipse cx="177.1" cy="72.4" rx="2" ry="2.4" fill="#c8bca0"/>
<rect x="181.7" y="74.9" width="5.2" height="24.0" rx="1.5" fill="#4a3a28"/>
<rect x="187.6" y="75.1" width="7.1" height="24.0" rx="1.5" fill="#7a5030"/>
<path d="M4.0 84.0 Q12.0 78.0 20.0 84.0 L21.0 110.0 L3.0 110.0 Z" fill="#a02c1c"/>
<ellipse cx="12.0" cy="79.0" rx="2.4" ry="2.8" fill="#cfc4b0"/>
<path d="M10.0 98.0 Q19.0 92.0 28.0 98.0 L29.0 116.0 L9.0 116.0 Z" fill="#b09048"/>
<ellipse cx="19.0" cy="93.0" rx="2.4" ry="2.8" fill="#cfc4b0"/>
<path d="M24.0 80.0 Q30.0 74.0 36.0 80.0 L37.0 102.0 L23.0 102.0 Z" fill="#c8a46a"/>
<ellipse cx="30.0" cy="75.0" rx="2.4" ry="2.8" fill="#c8b090"/>
<path d="M36.0 80.0 Q42.0 74.0 48.0 80.0 L49.0 100.0 L35.0 100.0 Z" fill="#c87a44"/>
<ellipse cx="42.0" cy="75.0" rx="2.4" ry="2.8" fill="#e0d8c0"/>
<path d="M48.0 81.0 Q57.0 75.0 66.0 81.0 L67.0 99.0 L47.0 99.0 Z" fill="#c23a22"/>
<ellipse cx="57.0" cy="76.0" rx="2.4" ry="2.8" fill="#c8b090"/>
<path d="M86.0 82.0 Q91.0 76.0 96.0 82.0 L97.0 102.0 L85.0 102.0 Z" fill="#4a3e30"/>
<ellipse cx="91.0" cy="77.0" rx="2.4" ry="2.8" fill="#c8b090"/>
<path d="M96.0 83.0 Q101.0 77.0 106.0 83.0 L107.0 101.0 L95.0 101.0 Z" fill="#8a7c62"/>
<ellipse cx="101.0" cy="78.0" rx="2.4" ry="2.8" fill="#e0d8c0"/>
<path d="M106.0 81.0 Q111.0 75.0 116.0 81.0 L117.0 99.0 L105.0 99.0 Z" fill="#2e3a2a"/>
<ellipse cx="111.0" cy="76.0" rx="2.4" ry="2.8" fill="#c8b090"/>
<path d="M116.0 82.0 Q122.0 76.0 128.0 82.0 L129.0 98.0 L115.0 98.0 Z" fill="#3a7040"/>
<ellipse cx="122.0" cy="77.0" rx="2.4" ry="2.8" fill="#d8c8a8"/>
<path d="M128.0 84.0 Q133.0 78.0 138.0 84.0 L139.0 100.0 L127.0 100.0 Z" fill="#e0d0a0"/>
<ellipse cx="133.0" cy="79.0" rx="2.4" ry="2.8" fill="#b8a080"/>
<path d="M134.0 84.0 Q146.0 78.0 158.0 84.0 L159.0 112.0 L133.0 112.0 Z" fill="#cac2aa"/>
<ellipse cx="146.0" cy="79.0" rx="2.4" ry="2.8" fill="#d8c8a8"/>
<path d="M150.0 86.0 Q158.0 80.0 166.0 86.0 L167.0 110.0 L149.0 110.0 Z" fill="#bc4c2a"/>
<ellipse cx="158.0" cy="81.0" rx="2.4" ry="2.8" fill="#b8a080"/>
<path d="M162.0 88.0 Q170.0 82.0 178.0 88.0 L179.0 116.0 L161.0 116.0 Z" fill="#98a0aa"/>
<ellipse cx="170.0" cy="83.0" rx="2.4" ry="2.8" fill="#cfc4b0"/>
<path d="M176.0 88.0 Q184.5 82.0 193.0 88.0 L194.0 118.0 L175.0 118.0 Z" fill="#3e2c1e"/>
<ellipse cx="184.5" cy="83.0" rx="2.4" ry="2.8" fill="#d8c8a8"/>
<rect x="64" y="90" width="22" height="19" fill="#1e2820"/>
<path d="M35 100 L40 101 L37 120 L33 119 Z" fill="#cfc6ae"/>
<path d="M57 102 L62 104 L57 119 L54 117 Z" fill="#cfc6ae"/>
<path d="M13 106 L17 108 L14 121 L10 120 Z" fill="#c8c0a8"/>
<path d="M156 106 L161 109 L155 123 L151 121 Z" fill="#d0c8b8"/>
<path d="M124 92 L138 90 L140 100 L126 102 Z" fill="#c04a2a"/>
<ellipse cx="71" cy="62" rx="4.5" ry="6" fill="#a8a088"/>
</g>
</svg>
  <div class="t cap" style="left:504.4px;top:459.0px;transform:scaleX(0.8999)">Reading of <span class="a">Voltaire</span>&#x27;s tragedy, <span class="a ii">The</span></div>
<div class="t cap" style="left:505.0px;top:475.9px;transform:scaleX(0.8804)"><span class="a ii">Orphan of China</span>, in the salon of <span class="a">Marie</span></div>
<div class="t cap" style="left:504.4px;top:492.7px;transform:scaleX(0.8695)"><span class="a">Thérèse Rodet Geoffrin</span> in 1755, by</div>
<div class="t cap" style="left:504.4px;top:509.2px;transform:scaleX(0.8961)"><span class="a">Anicet Charles Gabriel Lemonnier</span>,</div>
<div class="t cap" style="left:504.4px;top:525.9px;transform:scaleX(0.8710)"><span style="text-decoration:underline dotted;text-underline-offset:2px">c.</span> 1812<sup class="a">[note 1]</sup></div>

  <div class="shade"></div>
  <div class="strip"></div>
  <div class="side"></div>
  <div class="selbtn"></div>
  <!-- hamburger -->
  <svg style="left:12px;top:12px" width="16" height="16" viewBox="0 0 16 16"><path d="M3 4 H13.9 M3 8.2 H13.9 M3 12.5 H13.9" stroke="#111" stroke-width="1.75" stroke-linecap="round"/></svg>
  <!-- search -->
  <svg style="left:12px;top:79px" width="18" height="18" viewBox="0 0 18 18"><circle cx="7.2" cy="8.2" r="4.8" fill="none" stroke="#111" stroke-width="2"/><path d="M10.8 11.8 L14.2 15.2" stroke="#111" stroke-width="2" stroke-linecap="round"/></svg>
  <!-- list -->
  <svg style="left:12px;top:115px" width="18" height="18" viewBox="0 0 18 18"><circle cx="4" cy="4" r="1.8" fill="#111"/><circle cx="4" cy="8.5" r="1.8" fill="#111"/><circle cx="4" cy="12.8" r="1.8" fill="#111"/><path d="M8.7 4 H13.8 M8.7 8.5 H13.8 M8.7 12.8 H13.8" stroke="#111" stroke-width="2" stroke-linecap="round"/></svg>
  <!-- translate -->
  <svg style="left:12px;top:150px" width="18" height="18" viewBox="0 0 18 18"><path d="M5.8 2.4 V8 M2.4 6 H7.5 M6.6 7.4 L3.4 11" stroke="#111" stroke-width="1.8" stroke-linecap="round" fill="none"/><path d="M7.6 14.3 L10.5 4.1 H12.3 L14.5 14.3 M8.7 10.6 H13.5" stroke="#111" stroke-width="1.9" stroke-linecap="round" stroke-linejoin="round" fill="none"/></svg>
  <!-- bookmark -->
  <svg style="left:12px;top:184px" width="18" height="18" viewBox="0 0 18 18"><path d="M4.1 14.9 V5 Q4.1 3.7 5.4 3.7 H11.8 Q13.1 3.7 13.1 5 V14.9 L8.6 11.9 Z" fill="none" stroke="#111" stroke-width="1.8" stroke-linejoin="round"/></svg>
  <!-- history -->
  <svg style="left:12px;top:219px" width="18" height="18" viewBox="0 0 18 18"><circle cx="8.9" cy="9.1" r="5.5" fill="none" stroke="#111" stroke-width="1.8"/><path d="M7.1 7.4 L8.8 8.7 L11.7 6.1" stroke="#111" stroke-width="1.6" stroke-linecap="round" stroke-linejoin="round" fill="none"/></svg>
  <!-- sidebar toggle -->
  <svg style="left:12px;top:567px" width="18" height="18" viewBox="0 0 18 18"><rect x="2.5" y="2.9" width="12" height="11" rx="2" fill="#fff" stroke="#111" stroke-width="1.6"/><rect x="3.3" y="3.7" width="4" height="9.4" fill="#999"/><path d="M7.6 3 V14" stroke="#111" stroke-width="1"/></svg>

  <!-- sidebar title -->
  <div class="ttl" style="left:53.8px;top:14px;transform:scaleX(0.953)">Age of Enlightenment</div>
  <div class="t toc1" style="left:55.0px;top:51.1px;transform:scaleX(1.0040)">Important intellectuals</div>
<div class="t toc1" style="left:55.6px;top:78.1px;transform:scaleX(0.9601)">Topics</div>
<div class="t toc1" style="left:55.3px;top:340.8px;transform:scaleX(0.9760)">National variations</div>
<div class="t toc2" style="left:68.1px;top:104.6px;transform:scaleX(0.9373)">Philosophy</div>
<div class="t toc2" style="left:68.1px;top:131.2px;transform:scaleX(0.9361)">Science</div>
<div class="t toc2" style="left:68.1px;top:157.9px;transform:scaleX(0.9267)">Sociology, economics, and law</div>
<div class="t toc2" style="left:68.1px;top:183.7px;transform:scaleX(0.9361)">Politics</div>
<div class="t toc2" style="left:81.1px;top:210.5px;transform:scaleX(0.9386)">Theories of government</div>
<div class="t toc2" style="left:81.1px;top:236.8px;transform:scaleX(0.9448)">Enlightened absolutism</div>
<div class="t toc2" style="left:81.1px;top:263.0px;transform:scaleX(0.9251)">American Revolution and French Revolution</div>
<div class="t toc2" style="left:67.9px;top:289.2px;transform:scaleX(0.9274)">Religion</div>
<div class="t toc2" style="left:81.1px;top:315.5px;transform:scaleX(0.9253)">Separation of church and state</div>
<div class="t toc2" style="left:67.9px;top:368.0px;transform:scaleX(0.9361)">Great Britain</div>
<div class="t toc2" style="left:80.9px;top:394.0px;transform:scaleX(0.9327)">England</div>
<div class="t toc2" style="left:80.9px;top:420.3px;transform:scaleX(0.9346)">Scotland</div>
<div class="t toc2" style="left:80.9px;top:446.5px;transform:scaleX(0.9446)">Anglo-American colonies</div>
<div class="t toc2" style="left:67.9px;top:472.5px;transform:scaleX(0.9227)">German states</div>
<div class="t toc2" style="left:67.9px;top:498.9px;transform:scaleX(0.9370)">Habsburg monarchy</div>
<div class="t toc2" style="left:67.9px;top:525.3px;transform:scaleX(0.9644)">Italy</div>
<div class="t toc2" style="left:67.9px;top:551.2px;transform:scaleX(0.9127)">Bourbon Spain and Spanish America</div>
<div class="t toc2" style="left:67.9px;top:576.9px;transform:scaleX(0.9781)">Haiti</div>
</div>
<div class="border"></div>
</body></html>
